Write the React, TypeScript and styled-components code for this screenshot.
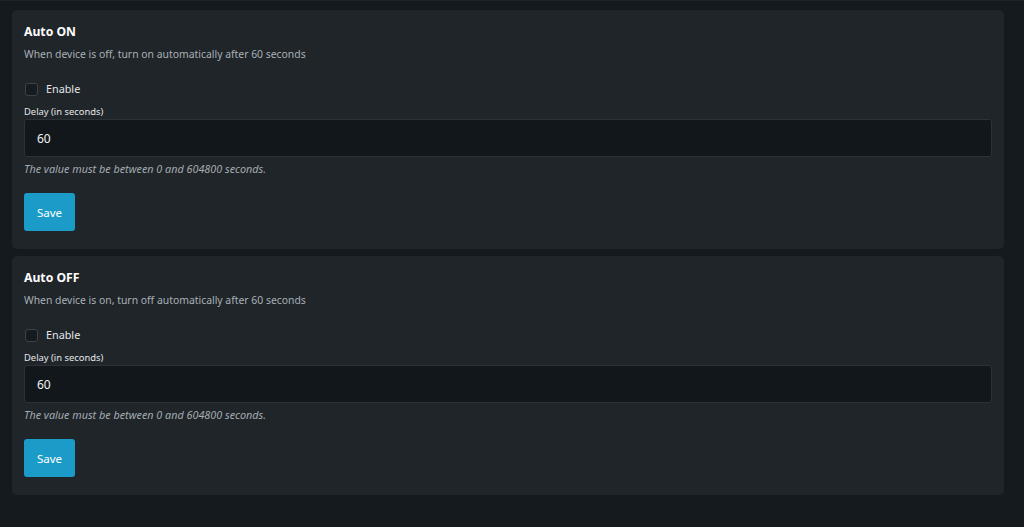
import styled, { createGlobalStyle } from "styled-components";

const GlobalStyle = createGlobalStyle`
  html, body {
    margin: 0;
    padding: 0;
    background: #151a1e;
  }
  body {
    font-family: "Noto Sans", "Open Sans", sans-serif;
    color: #e4e7ea;
  }
`;

const Page = styled.div`
  display: flex;
  flex-direction: column;
  gap: 7px;
  padding: 9px 20px 32px 12px;
  min-height: 527px;
  box-sizing: border-box;
  border-top: 1px solid #1c2226;
`;

const Card = styled.section`
  background: #1f2529;
  border-radius: 5px;
  padding: 13px 12px 18px 12px;
  display: flex;
  flex-direction: column;
`;

const Title = styled.h3`
  margin: 0;
  font-size: 12.2px;
  font-weight: 700;
  color: #ffffff;
  line-height: 18px;
`;

const Description = styled.p`
  margin: 5px 0 0 0;
  font-size: 10.4px;
  color: #a9b0b6;
  line-height: 16px;
`;

const CheckRow = styled.label`
  display: flex;
  align-items: center;
  gap: 8px;
  margin-top: 19px;
  font-size: 10.8px;
  color: #e4e7ea;
  line-height: 16px;
`;

const Box = styled.span`
  width: 11px;
  height: 11px;
  border: 1px solid #3b4349;
  border-radius: 3px;
  background: #161b1f;
  margin-left: 1px;
`;

const FieldLabel = styled.div`
  margin-top: 8px;
  font-size: 9.4px;
  color: #e4e7ea;
  line-height: 14px;
`;

const Input = styled.div`
  height: 36px;
  border: 1px solid #2c3338;
  border-radius: 3px;
  background: #12171b;
  display: flex;
  align-items: center;
  padding: 0 12px;
  font-size: 12px;
  color: #f1f3f5;
`;

const Help = styled.div`
  margin-top: 4px;
  font-size: 10.8px;
  font-style: italic;
  color: #a4abb1;
  line-height: 16px;
`;

const SaveButton = styled.button`
  margin-top: 16px;
  align-self: flex-start;
  width: 51px;
  height: 38px;
  border: 0;
  border-radius: 3px;
  background: #1b9cc8;
  color: #ffffff;
  font-family: inherit;
  font-size: 11.5px;
  cursor: pointer;
`;

type SettingProps = {
  title: string;
  description: string;
};

const AutoSetting = ({ title, description }: SettingProps) => (
  <Card>
    <Title>{title}</Title>
    <Description>{description}</Description>
    <CheckRow>
      <Box />
      Enable
    </CheckRow>
    <FieldLabel>Delay (in seconds)</FieldLabel>
    <Input>60</Input>
    <Help>The value must be between 0 and 604800 seconds.</Help>
    <SaveButton type="button">Save</SaveButton>
  </Card>
);

const App = () => {
  return (
    <>
      <GlobalStyle />
      <Page>
        <AutoSetting
          title="Auto ON"
          description="When device is off, turn on automatically after 60 seconds"
        />
        <AutoSetting
          title="Auto OFF"
          description="When device is on, turn off automatically after 60 seconds"
        />
      </Page>
    </>
  );
};

export default App;
